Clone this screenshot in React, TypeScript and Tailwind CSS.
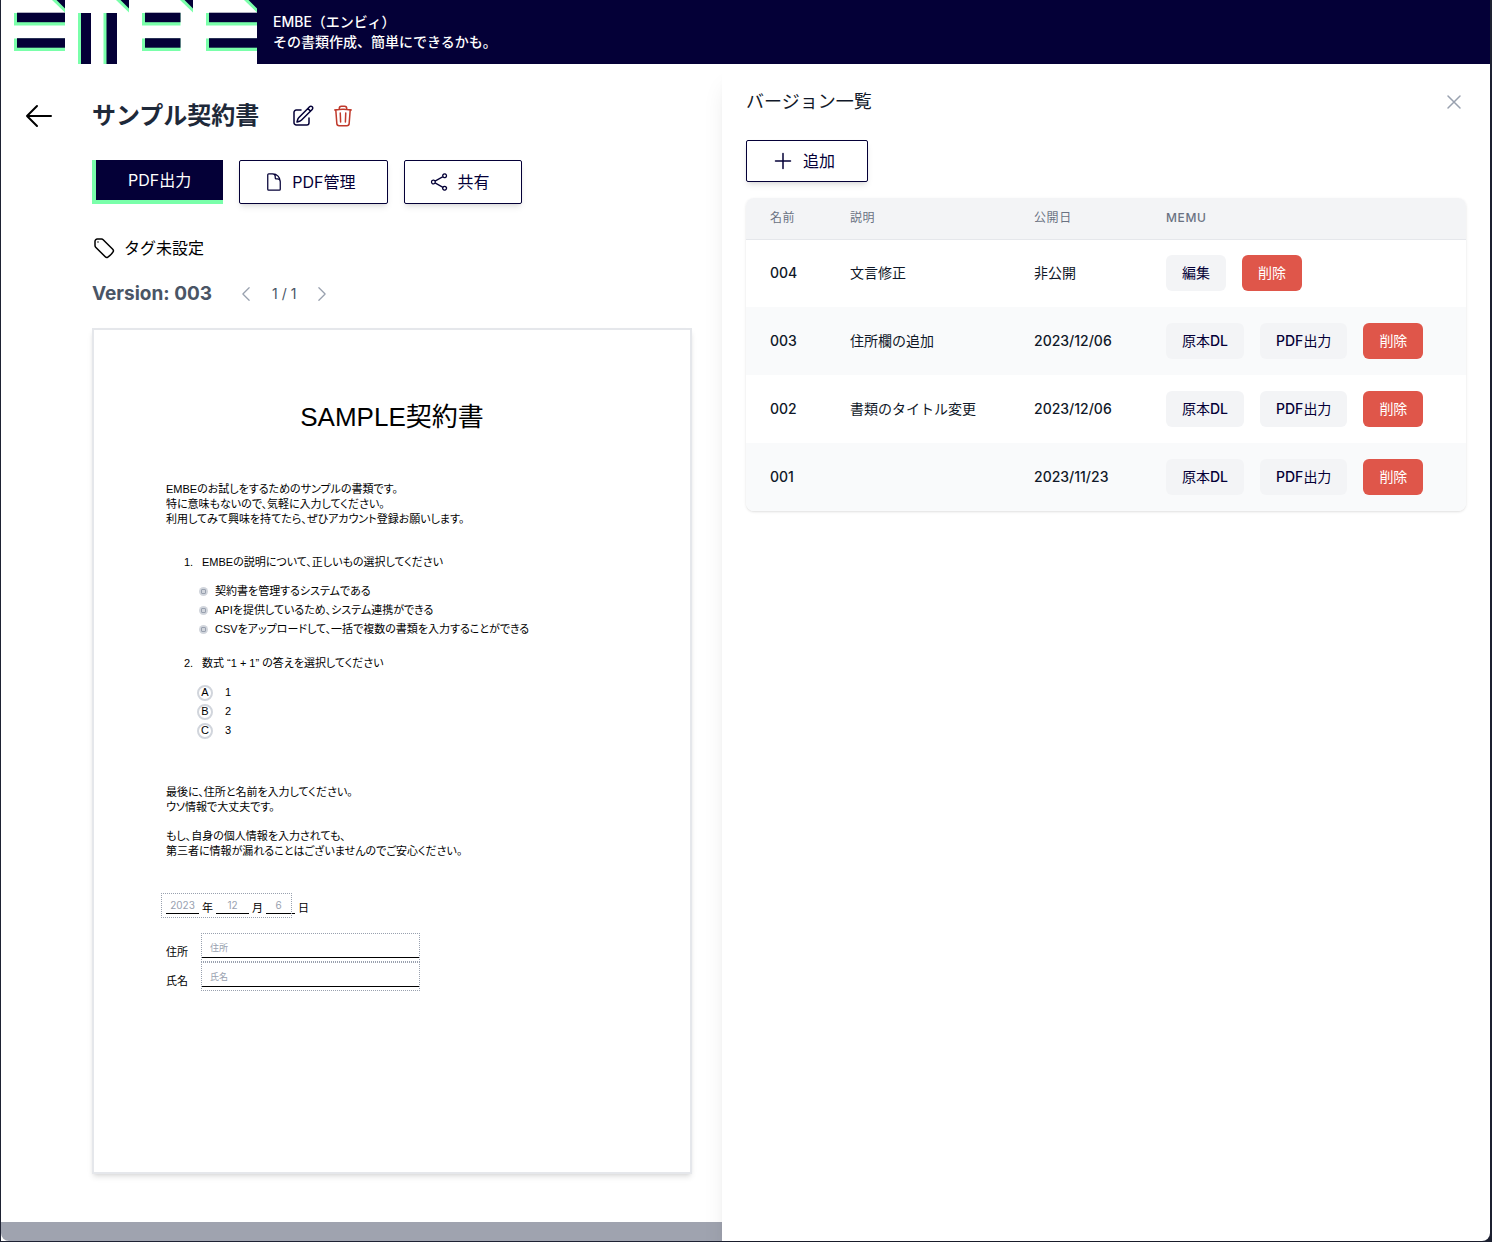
import type { ReactNode } from "react";
import {
  HiOutlineArrowLeft,
  HiOutlineChevronLeft,
  HiOutlineChevronRight,
  HiOutlineDocument,
  HiOutlinePencilSquare,
  HiOutlinePlus,
  HiOutlineShare,
  HiOutlineTag,
  HiOutlineTrash,
  HiOutlineXMark,
} from "react-icons/hi2";

const versions = [
  { name: "004", note: "文言修正", date: "非公開", draft: true },
  { name: "003", note: "住所欄の追加", date: "2023/12/06", draft: false },
  { name: "002", note: "書類のタイトル変更", date: "2023/12/06", draft: false },
  { name: "001", note: "", date: "2023/11/23", draft: false },
];

function LogoBar({ x, y, width }: { x: number; y: number; width: number }) {
  return (
    <>
      <rect x={x} y={y} width={width} height={12.5} fill="#7affaa" />
      <rect x={x + 3} y={y - 0.3} width={width - 3} height={9.5} fill="#040037" />
    </>
  );
}

function LogoCorner({ x }: { x: number }) {
  return (
    <>
      <path d={`M${x - 13} 0H${x}V12.5Z`} fill="#7affaa" />
      <path d={`M${x - 8.5} 0H${x}V8.5Z`} fill="#040037" />
    </>
  );
}

function Logo() {
  return (
    <svg viewBox="0 0 256 64" className="h-16 w-64 shrink-0 bg-white" role="img" aria-label="EMBE">
      <LogoCorner x={64} />
      <LogoBar x={13} y={13} width={51} />
      <LogoBar x={13} y={38.5} width={51} />
      <LogoCorner x={128} />
      <rect x={77} y={13} width={3.5} height={51} fill="#7affaa" />
      <rect x={80} y={13} width={10} height={51} fill="#040037" />
      <rect x={102.5} y={13} width={3.5} height={51} fill="#7affaa" />
      <rect x={105.5} y={13} width={10.5} height={51} fill="#040037" />
      <LogoCorner x={192} />
      <LogoBar x={141} y={13} width={38.5} />
      <LogoBar x={141} y={38.5} width={38.5} />
      <LogoCorner x={256} />
      <LogoBar x={205} y={13} width={51} />
      <LogoBar x={205} y={38.5} width={51} />
    </svg>
  );
}

function OutlineButton({ icon, children }: { icon: ReactNode; children: ReactNode }) {
  return (
    <button
      type="button"
      className="flex items-center gap-2 rounded-xs border border-[#040037] bg-white pr-8 pl-6 text-base text-[#040037] shadow-md"
    >
      {icon}
      <span>{children}</span>
    </button>
  );
}

function SmallButton({ danger = false, children }: { danger?: boolean; children: ReactNode }) {
  return (
    <button
      type="button"
      className={
        danger
          ? "rounded-md bg-[#df564a] px-4 py-2 text-sm text-white"
          : "rounded-md bg-gray-100 px-4 py-2 text-sm text-[#040037]"
      }
    >
      {children}
    </button>
  );
}

function CheckChoice({ children }: { children: ReactNode }) {
  return (
    <label className="flex h-[19px] items-center gap-[7px]">
      <input
        type="checkbox"
        className="flex size-[9px] appearance-none items-center justify-center rounded-full bg-gray-300 before:size-[5px] before:rounded-[1px] before:border before:border-gray-400 before:content-['']"
      />
      {children}
    </label>
  );
}

function LetterChoice({ letter, children }: { letter: string; children: ReactNode }) {
  return (
    <label className="flex h-[19px] items-center gap-3">
      <span className="relative flex size-4 items-center justify-center">
        {letter}
        <input
          type="radio"
          name="answer"
          className="absolute inset-0 appearance-none rounded-full border-2 border-gray-300"
        />
      </span>
      {children}
    </label>
  );
}

function DateInput({ label, value, wide }: { label: string; value: string; wide: boolean }) {
  return (
    <>
      <input
        id={`date-${label}`}
        defaultValue={value}
        className={
          wide
            ? "h-[21px] w-[33px] border-b border-black pt-1 text-center font-[Inter] text-[10px] text-gray-400"
            : "h-[21px] w-[29px] border-b border-black pt-1 pr-1 text-center font-[Inter] text-[10px] text-gray-400"
        }
      />
      <label htmlFor={`date-${label}`} className="w-[17px] pt-2 text-center">
        {label}
      </label>
    </>
  );
}

function TextRow({ label }: { label: string }) {
  return (
    <div className="flex h-[29px]">
      <label htmlFor={`field-${label}`} className="w-[35px] pt-3">
        {label}
      </label>
      <div className="w-[219px] border border-dotted border-gray-400">
        <input
          id={`field-${label}`}
          placeholder={label}
          className="block h-6 w-full border-b border-black px-2 pt-1 text-[9px] placeholder:text-gray-400"
        />
      </div>
    </div>
  );
}

function ContractPage() {
  return (
    <article className="mt-5 aspect-[600/846] w-[600px] border-2 border-gray-200 bg-white pt-[69px] font-['Liberation_Sans','Noto_Sans_CJK_JP',sans-serif] text-[11px] leading-[15px] text-black shadow-md [font-feature-settings:'palt']">
      <h3 className="text-center text-[26px] leading-9">SAMPLE契約書</h3>
      <div className="mt-[47px] px-[72px]">
        <p>
          EMBEのお試しをするためのサンプルの書類です。
          <br />
          特に意味もないので、気軽に入力してください。
          <br />
          利用してみて興味を持てたら、ぜひアカウント登録お願いします。
        </p>
        <ol className="pt-7 pl-[18px]">
          <li>
            <div className="flex">
              <span className="w-[18px]">1.</span>
              EMBEの説明について、正しいもの選択してください
            </div>
            <div className="mt-3 pl-[15px]">
              <CheckChoice>契約書を管理するシステムである</CheckChoice>
              <CheckChoice>APIを提供しているため、システム連携ができる</CheckChoice>
              <CheckChoice>CSVをアップロードして、一括で複数の書類を入力することができる</CheckChoice>
            </div>
          </li>
          <li className="mt-[17px]">
            <div className="flex">
              <span className="w-[18px]">2.</span>
              数式 “1 + 1” の答えを選択してください
            </div>
            <div className="mt-3 pl-[13px]">
              <LetterChoice letter="A">1</LetterChoice>
              <LetterChoice letter="B">2</LetterChoice>
              <LetterChoice letter="C">3</LetterChoice>
            </div>
          </li>
        </ol>
        <p className="mt-[45px]">
          最後に、住所と名前を入力してください。
          <br />
          ウソ情報で大丈夫です。
        </p>
        <p className="mt-[14px]">
          もし、自身の個人情報を入力されても、
          <br />
          第三者に情報が漏れることはございませんのでご安心ください。
        </p>
        <div className="relative mt-[34px] flex h-[25px]">
          <DateInput label="年" value="2023" wide />
          <DateInput label="月" value="12" wide />
          <DateInput label="日" value="6" wide={false} />
          <span className="pointer-events-none absolute inset-y-0 -left-[5px] w-[131px] border border-dotted border-gray-400" />
        </div>
        <div className="mt-[15px]">
          <TextRow label="住所" />
          <TextRow label="氏名" />
        </div>
      </div>
    </article>
  );
}

function DocumentPanel() {
  return (
    <main className="flex min-w-0 flex-1 flex-col bg-white">
      <div className="flex flex-1 pt-9 pb-12">
        <div className="w-[91px] shrink-0 pl-[22px]">
          <a href="#back" aria-label="戻る" className="inline-block text-black">
            <HiOutlineArrowLeft className="size-8" />
          </a>
        </div>
        <div>
          <div className="flex items-center">
            <h1 className="text-2xl font-bold text-gray-800">サンプル契約書</h1>
            <button type="button" aria-label="編集" className="ml-8 text-[#040037]">
              <HiOutlinePencilSquare className="size-6" />
            </button>
            <button type="button" aria-label="削除" className="ml-4 text-[#c0392b]">
              <HiOutlineTrash className="size-6" />
            </button>
          </div>
          <div className="mt-7 flex h-11 gap-4">
            <button
              type="button"
              className="border-b-4 border-l-4 border-[#7affaa] bg-[#040037] px-8 text-base text-white"
            >
              PDF出力
            </button>
            <OutlineButton icon={<HiOutlineDocument className="size-5" />}>PDF管理</OutlineButton>
            <OutlineButton icon={<HiOutlineShare className="size-5" />}>共有</OutlineButton>
          </div>
          <div className="mt-8 flex items-center gap-2 text-base text-black">
            <HiOutlineTag className="size-6" />
            タグ未設定
          </div>
          <div className="mt-5 flex h-7 items-center">
            <h2 className="text-[19px] font-bold text-gray-600">Version: 003</h2>
            <div className="ml-6 flex items-center gap-4 text-sm text-gray-600">
              <button type="button" aria-label="前のページ" className="text-gray-400">
                <HiOutlineChevronLeft className="size-5" />
              </button>
              <span>1 / 1</span>
              <button type="button" aria-label="次のページ" className="text-gray-400">
                <HiOutlineChevronRight className="size-5" />
              </button>
            </div>
          </div>
          <ContractPage />
        </div>
      </div>
      <div className="h-[19px] rounded-bl-lg bg-[#9fa3af]" />
    </main>
  );
}

function VersionPanel() {
  return (
    <aside className="w-3xl shrink-0 rounded-br-lg bg-white px-6 pt-6 shadow-xl">
      <div className="flex items-center justify-between">
        <h2 className="text-lg text-gray-900">バージョン一覧</h2>
        <button type="button" aria-label="閉じる" className="text-gray-400">
          <HiOutlineXMark className="size-6" />
        </button>
      </div>
      <div className="mt-6 flex h-[42px]">
        <OutlineButton icon={<HiOutlinePlus className="size-6" />}>追加</OutlineButton>
      </div>
      <div className="mt-4 overflow-hidden rounded-lg shadow">
        <table className="w-full table-fixed text-left text-sm text-gray-900">
          <thead className="border-b border-gray-200 bg-gray-100 text-xs tracking-wider text-gray-500">
            <tr className="h-[41px]">
              <th className="w-20 px-6 font-normal">名前</th>
              <th className="w-[184px] px-6 font-normal">説明</th>
              <th className="w-[132px] px-6 font-normal">公開日</th>
              <th className="px-6 font-medium">MEMU</th>
            </tr>
          </thead>
          <tbody>
            {versions.map((v) => (
              <tr key={v.name} className="h-[68px] even:bg-gray-50">
                <td className="px-6 font-medium">{v.name}</td>
                <td className="px-6">{v.note}</td>
                <td className={v.draft ? "px-6 whitespace-nowrap" : "px-6 font-medium whitespace-nowrap"}>
                  {v.date}
                </td>
                <td className="px-6">
                  <div className="flex gap-4">
                    {v.draft ? (
                      <SmallButton>編集</SmallButton>
                    ) : (
                      <>
                        <SmallButton>
                          原本<span className="font-medium">DL</span>
                        </SmallButton>
                        <SmallButton>
                          <span className="font-medium">PDF</span>出力
                        </SmallButton>
                      </>
                    )}
                    <SmallButton danger>削除</SmallButton>
                  </div>
                </td>
              </tr>
            ))}
          </tbody>
        </table>
      </div>
    </aside>
  );
}

export default function App() {
  return (
    <div className="flex min-h-screen flex-col bg-[#1e2233] pr-[2px] pb-px pl-px font-['Inter','Noto_Sans_CJK_JP',sans-serif]">
      <header className="relative z-10 flex items-center gap-4 bg-[#040037] text-white">
        <Logo />
        <p className="text-sm font-medium">
          EMBE（エンビィ）
          <br />
          その書類作成、簡単にできるかも。
        </p>
      </header>
      <div className="flex flex-1">
        <DocumentPanel />
        <VersionPanel />
      </div>
    </div>
  );
}
